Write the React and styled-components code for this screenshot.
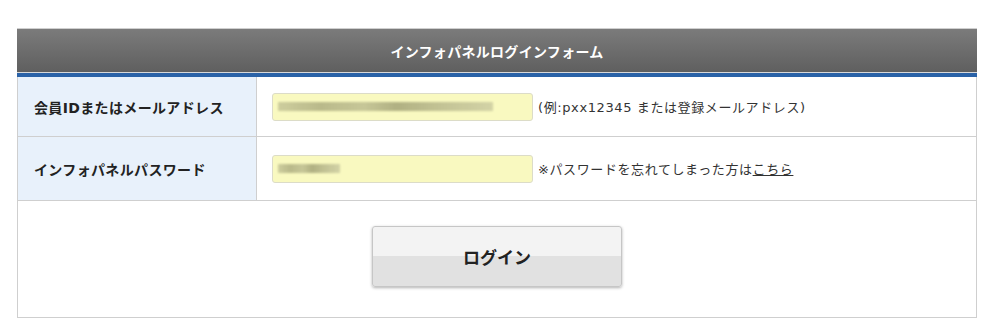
import React from 'react';
import styled, { createGlobalStyle } from 'styled-components';

const Global = createGlobalStyle`
    body {
        margin: 0;
        background: #fff;
        font-family: "DejaVu Sans", "Noto Sans CJK JP", sans-serif;
        color: #333;
    }
`;

const Page = styled.div`
    padding: 28px 13px 0 17px;
`;

const Panel = styled.form`
    width: 960px;
`;

const Header = styled.div`
    height: 45px;
    display: flex;
    align-items: center;
    justify-content: center;
    background: linear-gradient(#7b7b7b, #5f5f5f);
    border-top: 1px solid #cfcfcf;
    border-bottom: 1px solid #d8d8d8;
    box-sizing: border-box;
    color: #fff;
    font-size: 14px;
    font-weight: bold;
    letter-spacing: 0.3px;
`;

const BlueBar = styled.div`
    height: 4px;
    background: #2a62a7;
`;

const Table = styled.div`
    border: 1px solid #cfcfcf;
    border-top: none;
`;

const Row = styled.div`
    display: grid;
    grid-template-columns: 239px 1fr;
    height: ${p => p.$h}px;
    border-bottom: 1px solid #cfcfcf;
`;

const Label = styled.div`
    display: flex;
    align-items: center;
    padding-left: 16px;
    background: #e8f1fb;
    border-right: 1px solid #cfcfcf;
    font-size: 14px;
    font-weight: bold;
    letter-spacing: 0.35px;
    color: #222;
`;

const Field = styled.div`
    display: flex;
    align-items: center;
    gap: 5px;
    padding-left: 15px;
    font-size: 13px;
    letter-spacing: 0.6px;
    color: #333;
`;

const InputBox = styled.div`
    width: 261px;
    height: 28px;
    box-sizing: border-box;
    background: #f9f9c0;
    border: 1px solid #dcdcc8;
    border-radius: 3px;
    display: flex;
    align-items: center;
    padding-left: 5px;
    overflow: hidden;
`;

const Blurred = styled.span`
    display: block;
    height: 9px;
    width: ${p => p.$w}px;
    background: linear-gradient(90deg, #c9c99a, #b3b385 20%, #c2c294 40%, #a9a97c 55%, #bdbd90 75%, #cfcfa3);
    filter: blur(1.2px);
    opacity: 0.9;
`;

const Link = styled.a`
    color: #333;
    text-decoration: underline;
`;

const ButtonArea = styled.div`
    height: 116px;
    display: flex;
    align-items: flex-start;
    justify-content: center;
    padding-top: 25px;
    box-sizing: border-box;
`;

const LoginButton = styled.button`
    width: 250px;
    height: 61px;
    border: 1px solid #c6c6c6;
    border-radius: 3px;
    background: linear-gradient(#f3f3f3 50%, #e1e1e1 50%);
    box-shadow: 0 1px 3px rgba(0, 0, 0, 0.3);
    font-family: "DejaVu Sans", "Noto Sans CJK JP", sans-serif;
    font-size: 17px;
    font-weight: bold;
    color: #222;
    cursor: pointer;
`;

const App = () => {
    return (
        <Page>
            <Global />
            <Panel onSubmit={e => e.preventDefault()}>
                <Header>インフォパネルログインフォーム</Header>
                <BlueBar />
                <Table>
                    <Row $h={59}>
                        <Label>会員IDまたはメールアドレス</Label>
                        <Field>
                            <InputBox><Blurred $w={215} /></InputBox>
                            <span>(例:pxx12345 または登録メールアドレス)</span>
                        </Field>
                    </Row>
                    <Row $h={63}>
                        <Label>インフォパネルパスワード</Label>
                        <Field>
                            <InputBox><Blurred $w={62} /></InputBox>
                            <span>※パスワードを忘れてしまった方は<Link href="#">こちら</Link></span>
                        </Field>
                    </Row>
                    <ButtonArea>
                        <LoginButton type="submit">ログイン</LoginButton>
                    </ButtonArea>
                </Table>
            </Panel>
        </Page>
    );
};

export default App;
